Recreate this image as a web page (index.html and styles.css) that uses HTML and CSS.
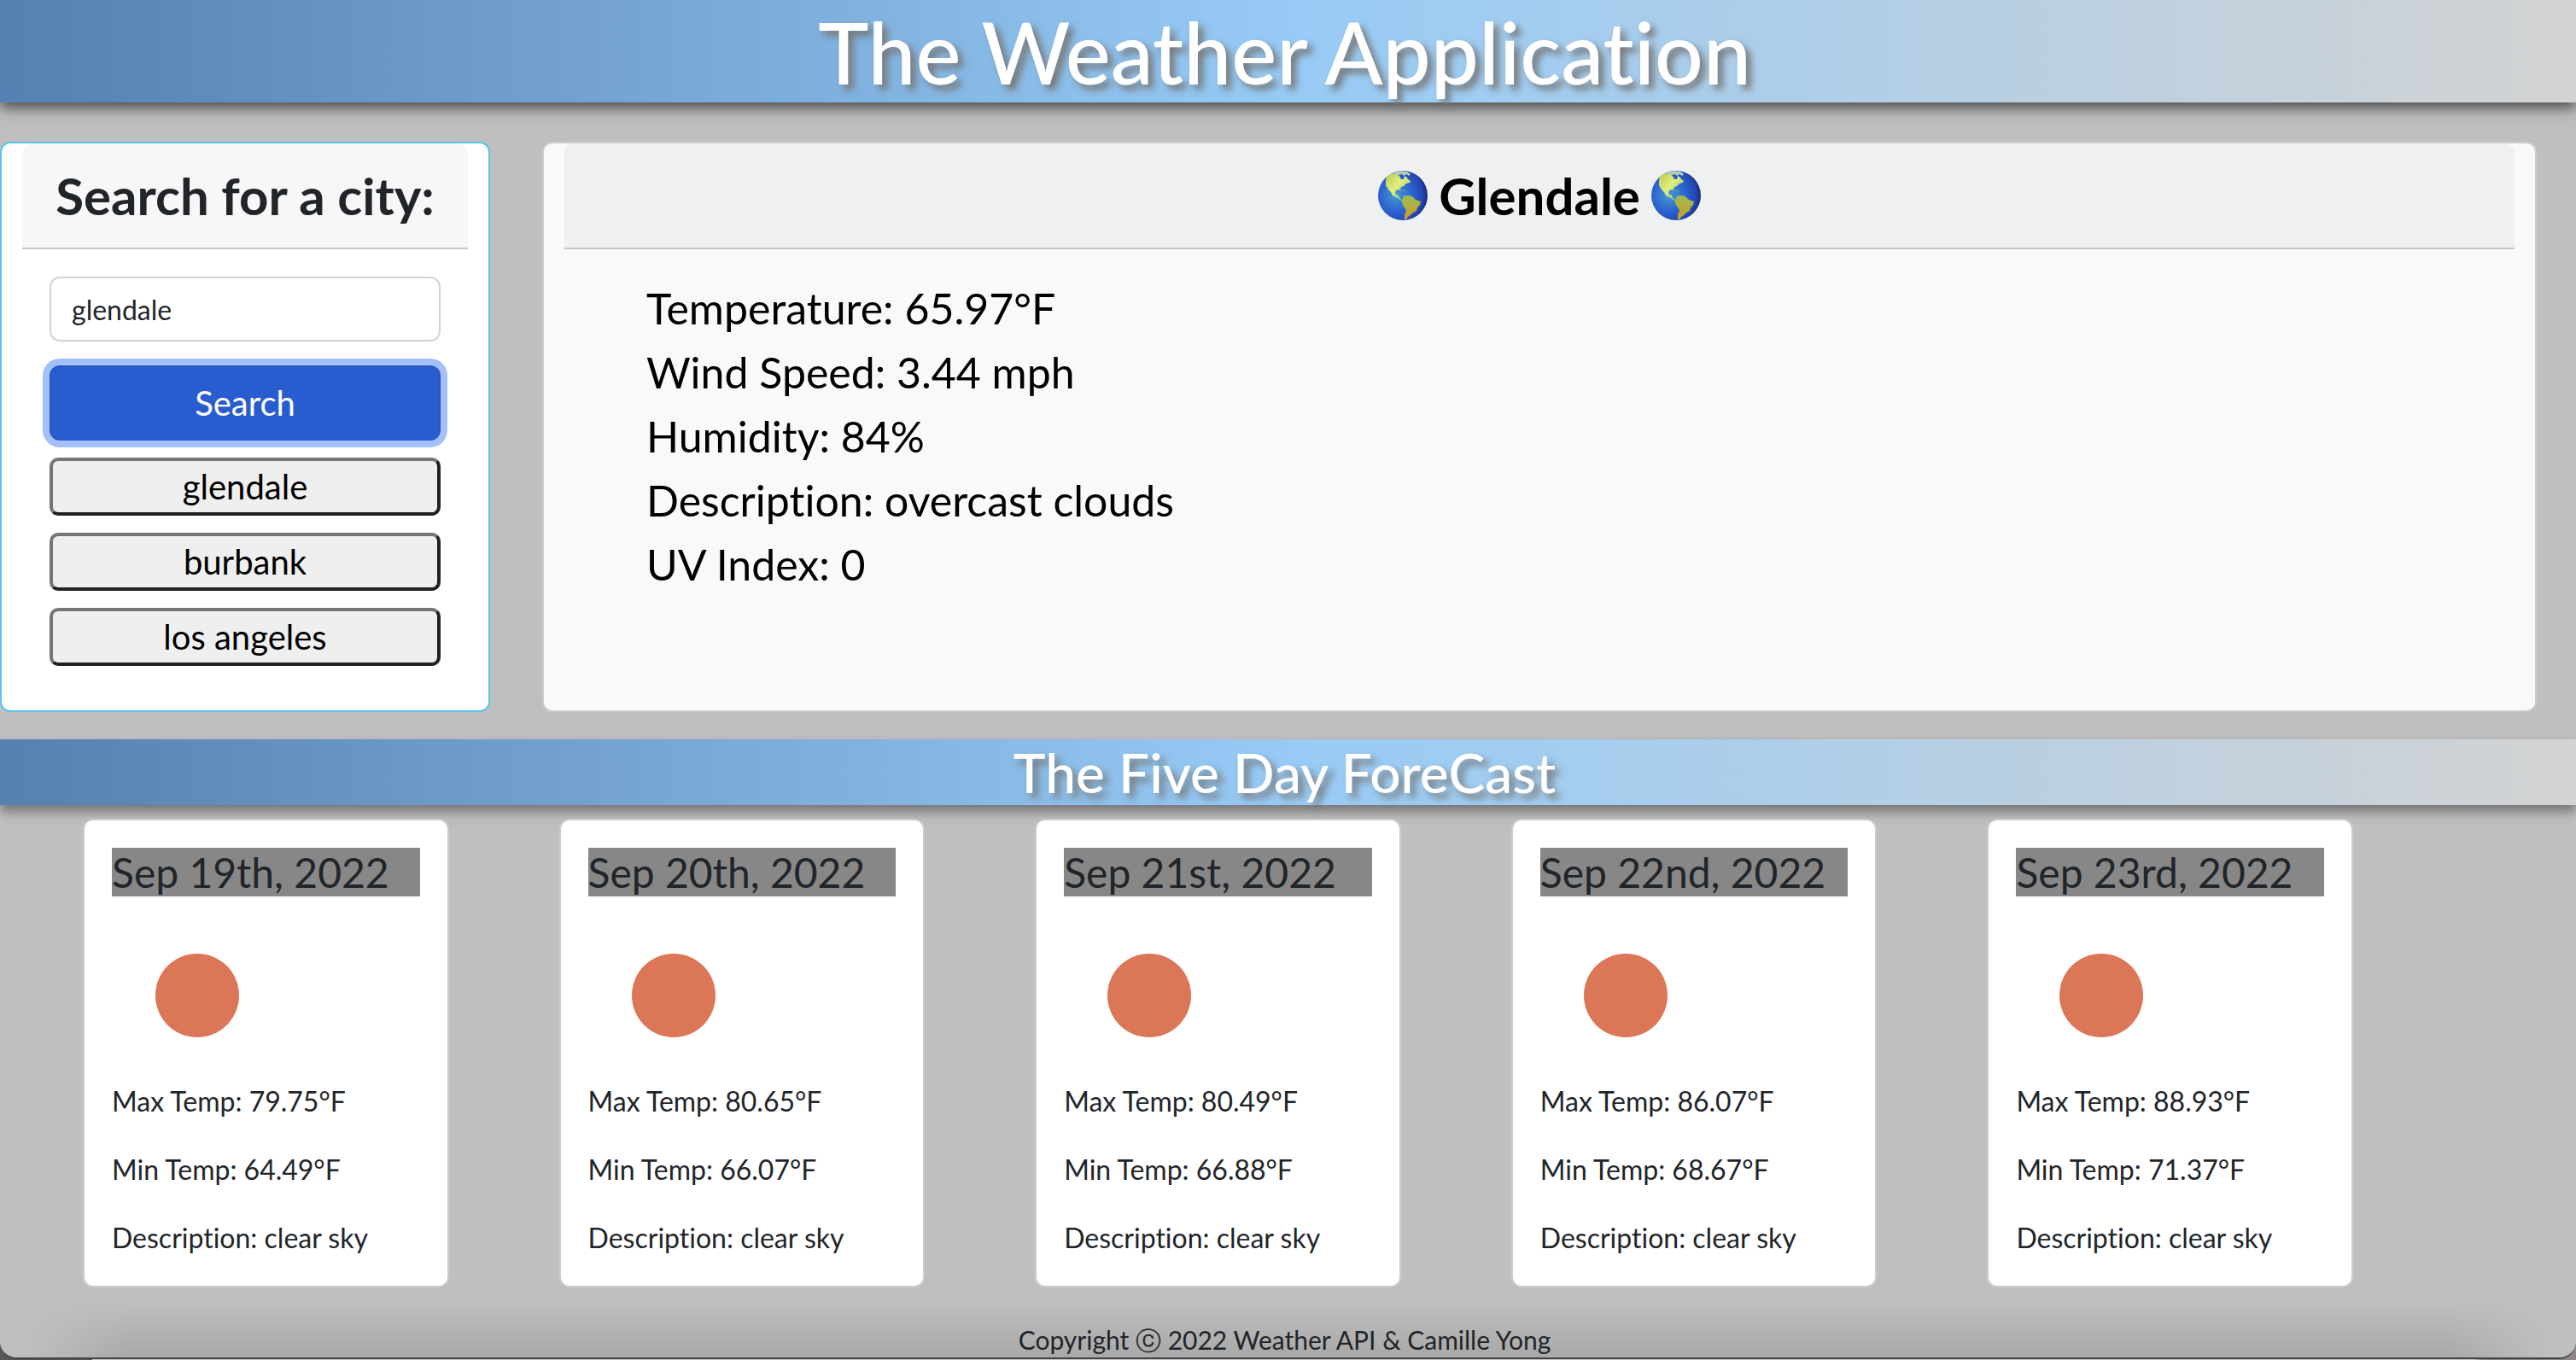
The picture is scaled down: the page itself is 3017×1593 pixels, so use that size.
FILE: index.html
```html
<!DOCTYPE html>
<html lang="en">
<head>
<meta charset="utf-8">
<meta name="viewport" content="width=device-width, initial-scale=1">
<title>The Weather Application</title>
<link rel="stylesheet" href="styles.css">
</head>
<body>
<svg class="symbols" aria-hidden="true">
  <defs>
    <radialGradient id="ocean" cx="36%" cy="50%" r="66%">
      <stop offset="0" stop-color="#4499d2"/>
      <stop offset=".5" stop-color="#2c63cf"/>
      <stop offset=".82" stop-color="#2447b4"/>
      <stop offset="1" stop-color="#1b2463"/>
    </radialGradient>
    <linearGradient id="north" x1="0" y1="0" x2="1" y2="1">
      <stop offset="0" stop-color="#b9c94a"/>
      <stop offset=".45" stop-color="#e0ef80"/>
      <stop offset="1" stop-color="#8fb878"/>
    </linearGradient>
    <linearGradient id="south" x1="0" y1="0" x2="0" y2="1">
      <stop offset="0" stop-color="#9fbb55"/>
      <stop offset="1" stop-color="#c79d25"/>
    </linearGradient>
    <clipPath id="disc"><circle cx="30" cy="30" r="29"/></clipPath>
    <symbol id="globe" viewBox="0 0 60 60">
      <circle cx="30" cy="30" r="29" fill="url(#ocean)"/>
      <g clip-path="url(#disc)">
        <path fill="url(#north)" d="M11 7l6-3 6 1 3 2 2 4 3 0 1-4 3 2 1 2 3 2-1 2-4 1-3 3-3 1-1 3 1 2-2-2-4 1-1 3 2 3 2-1 0 2 2 3 3 2-2 0-4-3-6-3-2-4-3-3-3-5 0-5z"/>
        <path fill="#b9cdb4" d="M20 3l7-2 8 1 4 3-2 2-3-2-3 2-2-2-4 1-3-1-3 1z"/>
        <path fill="#71ad72" d="M28 24l4 0 4 2-4-1-4 0z"/>
        <path fill="url(#south)" d="M30 32l3-2 5 0 4 2 3 3 6 2-1 4-3 3-1 4-4 2-3 3-3 2-2 3-2 0 0-5 2-6-3-4-2-4 0-3z"/>
        <path fill="#817a2e" d="M58 23l3 0 0 10-2-2z"/>
      </g>
    </symbol>
  </defs>
</svg>

<header class="banner banner-main"><h1>The Weather Application</h1></header>

<main>
  <section class="top">
    <form class="card search">
      <h2 class="card-head"><label for="city">Search for a city:</label></h2>
      <div class="controls">
        <input id="city" class="city" type="text" value="glendale">
        <button type="button" class="btn-search">Search</button>
        <button type="button" class="history">glendale</button>
        <button type="button" class="history">burbank</button>
        <button type="button" class="history">los angeles</button>
      </div>
    </form>

    <article class="card current">
      <h2 class="card-head"><svg class="globe"><use href="#globe"/></svg>Glendale<svg class="globe"><use href="#globe"/></svg></h2>
      <ul class="readings">
        <li>Temperature: 65.97°F</li>
        <li>Wind Speed: 3.44 mph</li>
        <li>Humidity: 84%</li>
        <li>Description: overcast clouds</li>
        <li>UV Index: 0</li>
      </ul>
    </article>
  </section>

  <div class="banner banner-sub"><h2>The Five Day ForeCast</h2></div>

  <section class="forecast">
    <article class="card day">
      <h3>Sep 19th, 2022</h3>
      <svg class="sun" viewBox="0 0 200 200" role="img" aria-label="clear sky"><circle cx="100" cy="100" r="49"/></svg>
      <p>Max Temp: 79.75°F</p><p>Min Temp: 64.49°F</p><p>Description: clear sky</p>
    </article>
    <article class="card day">
      <h3>Sep 20th, 2022</h3>
      <svg class="sun" viewBox="0 0 200 200" role="img" aria-label="clear sky"><circle cx="100" cy="100" r="49"/></svg>
      <p>Max Temp: 80.65°F</p><p>Min Temp: 66.07°F</p><p>Description: clear sky</p>
    </article>
    <article class="card day">
      <h3>Sep 21st, 2022</h3>
      <svg class="sun" viewBox="0 0 200 200" role="img" aria-label="clear sky"><circle cx="100" cy="100" r="49"/></svg>
      <p>Max Temp: 80.49°F</p><p>Min Temp: 66.88°F</p><p>Description: clear sky</p>
    </article>
    <article class="card day">
      <h3>Sep 22nd, 2022</h3>
      <svg class="sun" viewBox="0 0 200 200" role="img" aria-label="clear sky"><circle cx="100" cy="100" r="49"/></svg>
      <p>Max Temp: 86.07°F</p><p>Min Temp: 68.67°F</p><p>Description: clear sky</p>
    </article>
    <article class="card day">
      <h3>Sep 23rd, 2022</h3>
      <svg class="sun" viewBox="0 0 200 200" role="img" aria-label="clear sky"><circle cx="100" cy="100" r="49"/></svg>
      <p>Max Temp: 88.93°F</p><p>Min Temp: 71.37°F</p><p>Description: clear sky</p>
    </article>
  </section>
</main>

<footer class="footer">Copyright ⓒ 2022 Weather API &amp; Camille Yong</footer>
</body>
</html>
```
FILE: styles.css
```css
* { box-sizing: border-box; }

html {
  background: linear-gradient(90deg, #5b5656 108px, #cfc6c6 108px, #cfc6c6 calc(100% - 120px), #8d8585 calc(100% - 110px));
}

body {
  margin: 0 0 1px;
  border-bottom: 2px solid #444;
  border-radius: 0 0 20px 20px;
  background: #bfbfbf;
  color: #212529;
  font: 32px/48px Lato, "Noto Sans", sans-serif;
  font-variant-ligatures: none;
}

h1, h2, h3, p, ul { margin: 0; padding: 0; font-weight: 400; }
button, input { font: inherit; color: inherit; }
.symbols { display: block; width: 0; height: 0; }

.banner {
  padding-right: 8px;
  background: linear-gradient(90deg, #5580b1, #97cbf6 50%, #d3d3d3);
  color: #fff;
  text-align: center;
  text-shadow: 6px 6px 8px #777;
}
.banner h1, .banner h2 { font-weight: 500; }
.banner-main { box-shadow: 0 6px 16px #444; }
.banner-main h1 { font-size: 100px; line-height: 120px; }
.banner-sub { box-shadow: 0 8px 12px #777; }
.banner-sub h2 { font-size: 64px; line-height: 77px; }

.card {
  background: #fff;
  border: 2px solid #ccc;
  border-radius: 12px;
}

.top {
  display: grid;
  grid-template-columns: 574fr 2336fr;
  gap: 61px;
  padding: 46px 46px 32px 0;
}
.search { border-color: #5bc5ea; padding: 0 24px 52px; }
.current { background: #f8f9fb; color: #000; padding: 0 24px; }
.card-head {
  display: flex;
  justify-content: center;
  align-items: center;
  gap: 12px;
  height: 124px;
  background: #f7f7f7;
  border-bottom: 2px solid #c6c6c6;
  border-radius: 12px 12px 0 0;
  font-size: 60px;
  font-weight: 700;
  white-space: nowrap;
}
.current .card-head { background: #eff0f2; }
.globe { width: 60px; height: 60px; }

.controls { display: flex; flex-direction: column; gap: 20px; padding: 32px 32px 0; }
.city {
  width: 100%;
  height: 76px;
  margin-bottom: 8px;
  padding: 0 24px;
  background: #fff;
  border: 2px solid #ced4da;
  border-radius: 12px;
}
.btn-search {
  height: 88px;
  background: #295dcf;
  border: 2px solid #2757c2;
  border-radius: 12px;
  box-shadow: 0 0 0 8px #a4c0fb;
  color: #fff;
  font-size: 40px;
}
.history {
  height: 68px;
  padding: 0;
  background: #efefef;
  border: 4px solid;
  border-color: #767676 #212121 #212121 #767676;
  border-radius: 10px;
  color: #000;
  font-size: 40px;
}

.readings { padding: 32px 96px; list-style: none; font-size: 50px; line-height: 75px; }

.forecast {
  display: grid;
  grid-template-columns: repeat(5, 1fr);
  gap: 129px;
  padding: 16px 261px 0 97px;
}
.day { padding: 32px; }
.day h3 { background: #878787; font-size: 48px; line-height: 57px; white-space: nowrap; }
.sun { display: block; width: 200px; height: 200px; margin-top: 16px; fill: #db7656; }
.day p + p { margin-top: 32px; }

.footer {
  padding: 40px 8px 0 0;
  border-radius: 0 0 20px 20px;
  background:
    linear-gradient(90deg, #bfbfbf 1%, transparent 5%, transparent 95%, #bfbfbf 99%),
    linear-gradient(#bfbfbf 20%, #a8a8a8);
  font-size: 30px;
  line-height: 42px;
  text-align: center;
}
```
